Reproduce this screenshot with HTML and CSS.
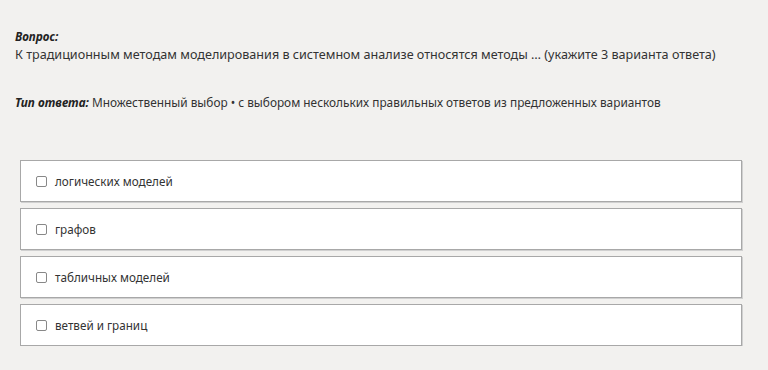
FILE: index.html
```html
<!DOCTYPE html>
<html lang="ru">
<head>
    <meta charset="UTF-8">
    <title>Вопрос</title>
    <link rel="stylesheet" href="styles.css">
</head>
<body>

<div class="question">
    <div class="label">Вопрос:</div>
    <div class="text">К традиционным методам моделирования в системном анализе относятся методы … (укажите 3 варианта ответа)</div>
</div>

<div class="answer-type">
    <span class="label">Тип ответа:</span> Множественный выбор • с выбором нескольких правильных ответов из предложенных вариантов
</div>

<div class="options">
    <label class="option"><span class="box"></span>логических моделей</label>
    <label class="option"><span class="box"></span>графов</label>
    <label class="option"><span class="box"></span>табличных моделей</label>
    <label class="option"><span class="box"></span>ветвей и границ</label>
</div>

</body>
</html>
```

FILE: styles.css
```css
body {
    font-family: "Noto Sans", "Open Sans", sans-serif;
    font-size: 11.7px;
    color: #333;
    background: #f2f1ef;
    margin: 0;
    padding: 28px 15px 0 15px;
}
.label {
    font-weight: bold;
    font-style: italic;
    color: #222;
}
.question .label {
    line-height: 16px;
}
.question .text {
    font-size: 12.6px;
    line-height: 22px;
}
.answer-type {
    margin-top: 26px;
    font-size: 11.85px;
    line-height: 20px;
}
.options {
    margin: 48px 11px 0 5px;
    display: flex;
    flex-direction: column;
    gap: 6px;
}
.option {
    display: flex;
    align-items: center;
    height: 40px;
    background: #fff;
    border: 1px solid #a8a8a8;
    box-shadow: 1px 1px 0 #d0d0d0;
    padding-left: 15px;
}
.box {
    width: 9px;
    height: 9px;
    border: 1px solid #888;
    border-radius: 2px;
    margin-right: 8px;
}
```
